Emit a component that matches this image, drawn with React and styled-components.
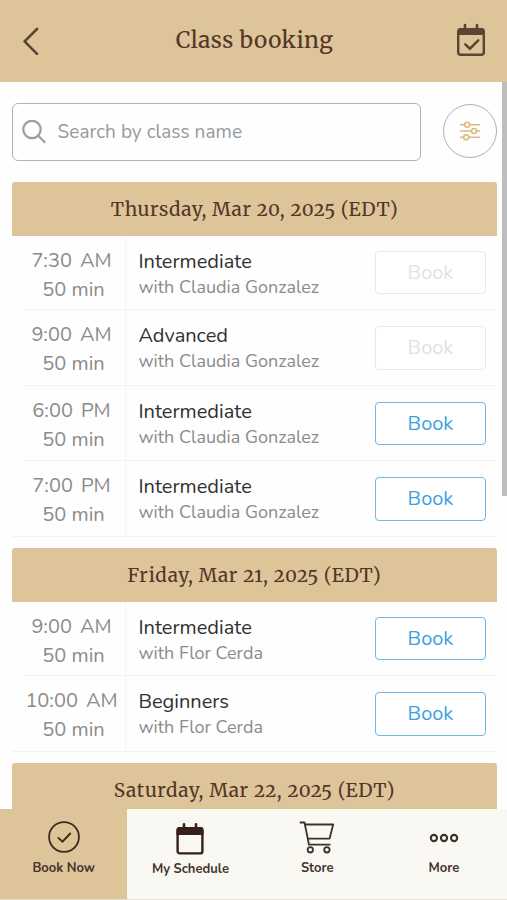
import React from "react";
import styled, { createGlobalStyle } from "styled-components";

const days = [
  {
    date: "Thursday, Mar 20, 2025 (EDT)",
    classes: [
      { time: "7:30", period: "AM", name: "Intermediate", coach: "Claudia Gonzalez", open: false },
      { time: "9:00", period: "AM", name: "Advanced", coach: "Claudia Gonzalez", open: false },
      { time: "6:00", period: "PM", name: "Intermediate", coach: "Claudia Gonzalez", open: true },
      { time: "7:00", period: "PM", name: "Intermediate", coach: "Claudia Gonzalez", open: true },
    ],
  },
  {
    date: "Friday, Mar 21, 2025 (EDT)",
    classes: [
      { time: "9:00", period: "AM", name: "Intermediate", coach: "Flor Cerda", open: true },
      { time: "10:00", period: "AM", name: "Beginners", coach: "Flor Cerda", open: true },
    ],
  },
  { date: "Saturday, Mar 22, 2025 (EDT)", classes: [] },
];

const BackIcon = () => (
  <svg width="18" height="30" viewBox="0 0 18 30" fill="none" stroke="#5e4236" strokeWidth="2.6" strokeLinecap="round" strokeLinejoin="round">
    <path d="M15 4 2.6 16.4 15 28.8" />
  </svg>
);

const CalendarCheckIcon = () => (
  <svg width="30" height="34" viewBox="0 0 30 34" fill="none" stroke="#5e4236">
    <rect x="2.2" y="6.2" width="25.6" height="25.6" rx="2.6" strokeWidth="2.4" />
    <path d="M1.5 12V8q0-3 3-3h21q3 0 3 3v4z" fill="#5e4236" stroke="none" />
    <path d="M9 2V6M21 2V6" strokeWidth="2.6" strokeLinecap="round" />
    <path d="m9.3 21.3 4.6 4.4 8.4-8.4" strokeWidth="2.4" strokeLinecap="round" />
  </svg>
);

const SearchIcon = () => (
  <svg width="25" height="25" viewBox="0 0 25 25" fill="none" stroke="#98a0a4" strokeWidth="2.2">
    <circle cx="10" cy="9.5" r="8.7" />
    <path d="m16.2 15.7 7 7" />
  </svg>
);

const FilterIcon = () => (
  <svg width="22" height="20" viewBox="0 0 22 20" fill="none" stroke="#e0b97c" strokeWidth="1.6">
    <path d="M1 3.8h4.5M11 3.8h10M1 10h11.5M17.5 10H21M1 16.2h3.5M10 16.2h11" />
    <circle cx="8.2" cy="3.8" r="2.5" />
    <circle cx="15" cy="10" r="2.5" />
    <circle cx="7.2" cy="16.2" r="2.5" />
  </svg>
);

const BookIcon = () => (
  <svg width="34" height="34" viewBox="0 0 34 34" fill="none" stroke="#3f291f" strokeWidth="1.8">
    <circle cx="17" cy="17" r="14.9" />
    <path d="m10.8 17.4 4.7 4.2 8.2-8.6" strokeWidth="1.9" />
  </svg>
);

const ScheduleIcon = () => (
  <svg width="28" height="32" viewBox="0 0 28 32" fill="none" stroke="#36201a">
    <rect x="1.6" y="5.2" width="24.8" height="25.2" rx="2.2" strokeWidth="2.4" />
    <path d="M.5 12V7q0-3 3-3h21q3 0 3 3v5z" fill="#36201a" stroke="none" />
    <path d="M8 1.4V5M20 1.4V5" strokeWidth="2.6" strokeLinecap="round" />
  </svg>
);

const CartIcon = () => (
  <svg width="36" height="34" viewBox="0 0 36 34" fill="none" stroke="#3f3029" strokeWidth="1.8" strokeLinejoin="round">
    <path d="M.8 2.5h4.7L10 24.7h21.5M6 4.5h28.2l-3.6 14-21.8.2" />
    <circle cx="11.3" cy="29.8" r="2.7" />
    <circle cx="27.9" cy="29.8" r="2.7" />
  </svg>
);

const MoreIcon = () => (
  <svg width="30" height="34" viewBox="0 0 30 34" fill="none" stroke="#3f3029" strokeWidth="2.1">
    <circle cx="4.9" cy="18" r="3.1" />
    <circle cx="15" cy="18" r="3.1" />
    <circle cx="25.1" cy="18" r="3.1" />
  </svg>
);

const tabs = [
  { label: "Book Now", icon: <BookIcon />, active: true },
  { label: "My Schedule", icon: <ScheduleIcon />, lower: true },
  { label: "Store", icon: <CartIcon /> },
  { label: "More", icon: <MoreIcon /> },
];

const App = () => {
  return (
    <Screen>
      <GlobalStyle />
      <Header>
        <IconButton>
          <BackIcon />
        </IconButton>
        <Title>Class booking</Title>
        <IconButton>
          <CalendarCheckIcon />
        </IconButton>
      </Header>
      <Body>
        <Content>
          <SearchRow>
            <SearchBox>
              <SearchIcon />
              <Placeholder>Search by class name</Placeholder>
            </SearchBox>
            <FilterButton>
              <FilterIcon />
            </FilterButton>
          </SearchRow>
          {days.map((day) => (
            <Day key={day.date}>
              <DayTitle>{day.date}</DayTitle>
              {day.classes.map((item) => (
                <ClassRow key={item.time}>
                  <TimeCell>
                    <Time>
                      <span>{item.time}</span>
                      <span>{item.period}</span>
                    </Time>
                    <Duration>50 min</Duration>
                  </TimeCell>
                  <InfoCell>
                    <ClassName>{item.name}</ClassName>
                    <Coach>with {item.coach}</Coach>
                  </InfoCell>
                  <BookButton disabled={!item.open}>Book</BookButton>
                </ClassRow>
              ))}
            </Day>
          ))}
        </Content>
        <Scrollbar>
          <Thumb />
        </Scrollbar>
      </Body>
      <TabBar>
        {tabs.map((tab) => (
          <Tab key={tab.label} $active={tab.active} $lower={tab.lower}>
            {tab.icon}
            <TabLabel>{tab.label}</TabLabel>
          </Tab>
        ))}
      </TabBar>
    </Screen>
  );
};

export default App;

const GlobalStyle = createGlobalStyle`
  * {
    box-sizing: border-box;
  }
  body {
    margin: 0;
    background: #fefefe;
    font-family: Nunito, Lato, "Open Sans", sans-serif;
  }
  svg {
    display: block;
    flex: none;
  }
`;

const Screen = styled.div`
  display: flex;
  flex-direction: column;
  width: 507px;
  height: 900px;
  overflow: hidden;
`;

const Header = styled.header`
  display: flex;
  align-items: center;
  justify-content: space-between;
  flex: none;
  height: 82px;
  padding: 0 21px 2px 22px;
  background: #ddc499;
`;

const IconButton = styled.button`
  padding: 0;
  border: 0;
  background: none;
`;

const Title = styled.h1`
  margin: 0 0 0 13px;
  color: #54352a;
  font: 400 22.5px/30px Merriweather, "DejaVu Serif", serif;
  letter-spacing: 0.45px;
`;

const Body = styled.main`
  display: flex;
  flex: 1;
  min-height: 0;
`;

const Content = styled.div`
  flex: 1;
  min-width: 0;
  padding: 21px 5px 0 12px;
  overflow: hidden;
`;

const SearchRow = styled.div`
  display: flex;
  justify-content: space-between;
  height: 58px;
  margin-bottom: 21px;
`;

const SearchBox = styled.div`
  display: flex;
  align-items: center;
  width: 409px;
  padding-left: 9px;
  border: 1.5px solid #adb5b8;
  border-radius: 6px;
  gap: 10.5px;
`;

const Placeholder = styled.span`
  color: #949a9f;
  font-size: 19px;
  letter-spacing: 0.05px;
`;

const FilterButton = styled.button`
  display: flex;
  align-items: center;
  justify-content: center;
  width: 54px;
  height: 54px;
  margin-top: 1px;
  padding: 0;
  border: 1.5px solid #adb2b5;
  border-radius: 50%;
  background: none;
`;

const Day = styled.section`
  margin-bottom: 11.2px;
`;

const DayTitle = styled.h2`
  height: 54px;
  margin: 0;
  border-radius: 3px 3px 0 0;
  background: #ddc499;
  color: #54352a;
  font: 400 19px/54px Merriweather, "DejaVu Serif", serif;
  font-variant-numeric: oldstyle-nums;
  letter-spacing: 0.66px;
  text-align: center;
`;

const ClassRow = styled.div`
  display: flex;
  height: 75.5px;
  margin-left: 11px;
  border-bottom: 1px solid #f2f4f4;

  &:first-of-type {
    height: 74.4px;
  }
  &:last-child {
    margin-left: 0;
    padding-left: 11px;
  }
`;

const TimeCell = styled.div`
  display: flex;
  flex-direction: column;
  align-items: center;
  width: 103px;
  padding: 10px 5px 0 0;
  border-right: 1px solid #f4f6f6;
  color: #8b8b8b;
  font-size: 20px;
  line-height: 29px;
`;

const Time = styled.div`
  display: flex;
  gap: 8px;
`;

const Duration = styled.div`
  padding-left: 4px;
`;

const InfoCell = styled.div`
  display: flex;
  flex: 1;
  flex-direction: column;
  padding: 13px 0 0 12.4px;
`;

const ClassName = styled.div`
  color: #303030;
  font-size: 20px;
  line-height: 25px;
`;

const Coach = styled.div`
  color: #8b8b8b;
  font-size: 18px;
  line-height: 26px;
`;

const BookButton = styled.button`
  align-self: flex-end;
  width: 111px;
  height: 43.5px;
  margin: 0 11px 15.3px 0;
  padding: 1px 0 0;
  border: 1.5px solid #6db7eb;
  border-radius: 4px;
  background: #fff;
  color: #3d9fe2;
  font: 400 20px/40px Nunito, Lato, "Open Sans", sans-serif;

  &:disabled {
    border-color: #e7e7e7;
    color: #e2e2e2;
  }
`;

const Scrollbar = styled.div`
  width: 5px;
`;

const Thumb = styled.div`
  height: 414px;
  background: #bdbdbd;
`;

const TabBar = styled.nav`
  display: grid;
  grid-template-columns: repeat(4, 1fr);
  flex: none;
  height: 91px;
  border-bottom: 1px solid #e4dfd8;
  background: #faf8f3;
`;

const Tab = styled.div`
  display: flex;
  flex-direction: column;
  align-items: center;
  gap: 5px;
  padding: ${(props) => (props.$lower ? "14px" : "11px")} 0 0 0.6px;
  background: ${(props) => (props.$active ? "#ddc499" : "transparent")};
`;

const TabLabel = styled.span`
  color: #45342d;
  font-size: 13px;
  font-weight: 700;
  line-height: 18px;
`;
